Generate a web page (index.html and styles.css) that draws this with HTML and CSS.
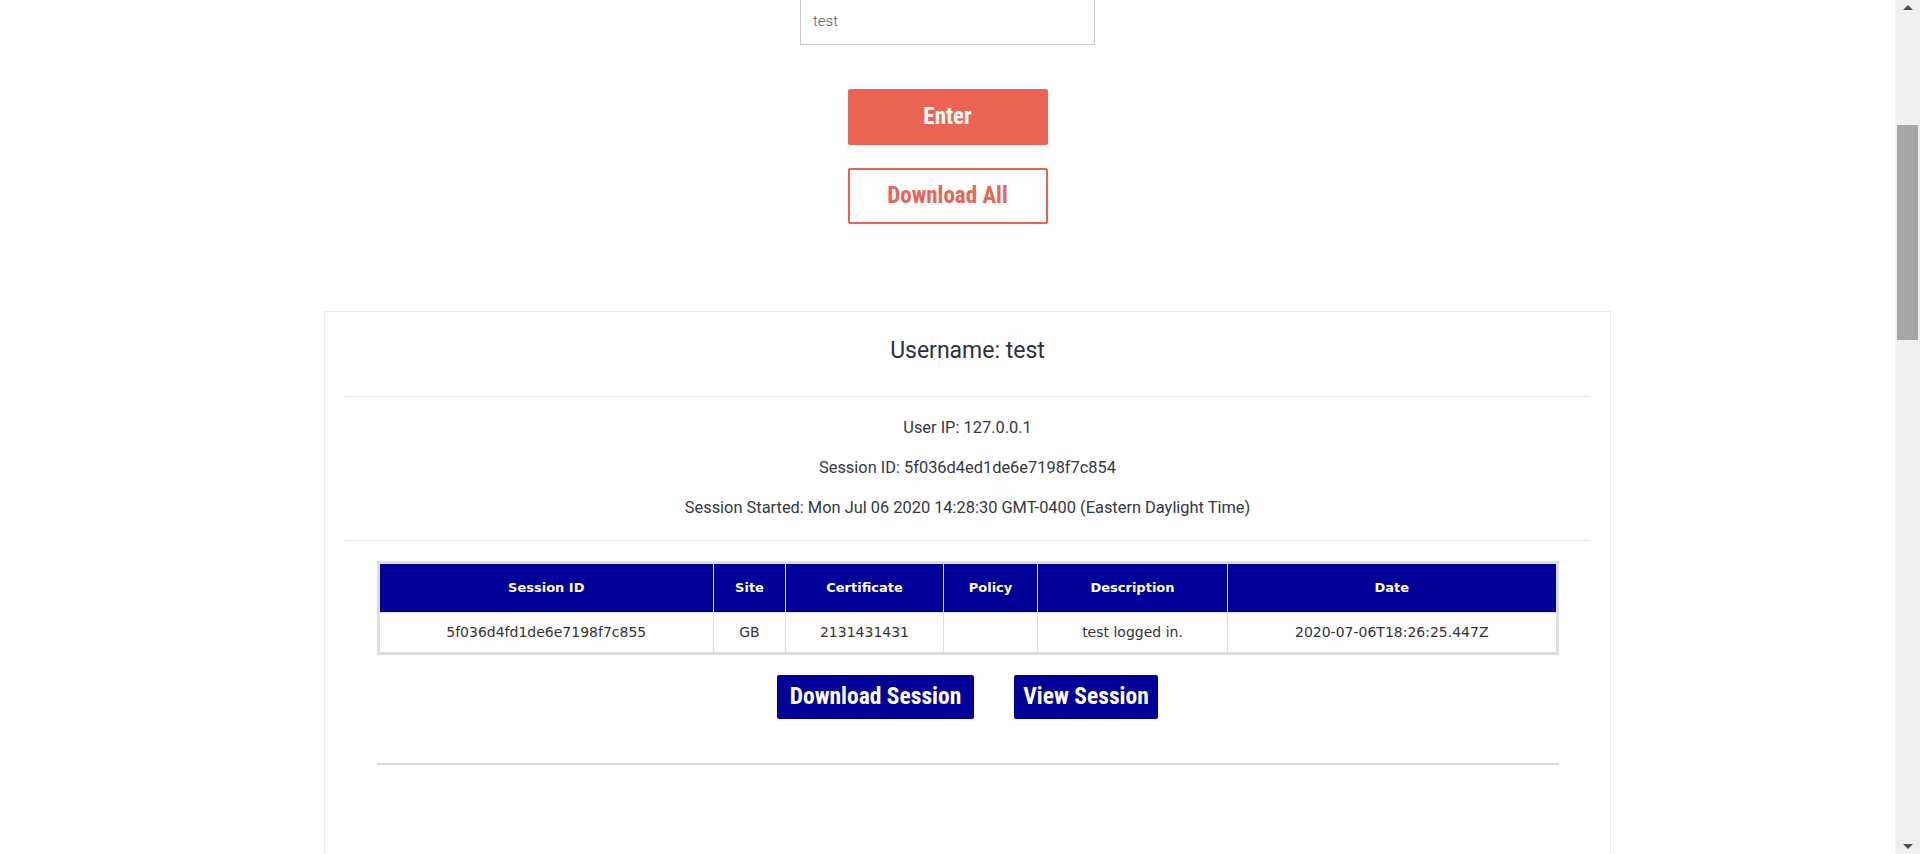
FILE: index.html
```html
<!DOCTYPE html>
<html lang="en">
<head>
<meta charset="utf-8">
<title>Sessions</title>
<link rel="stylesheet" href="styles.css">
</head>
<body>
<div class="page">
  <main class="main">
    <section class="login">
      <input class="user-input" type="text" value="test">
      <button class="btn-enter">Enter</button>
      <button class="btn-download-all">Download All</button>
    </section>

    <section class="card">
      <h2 class="card-title">Username: test</h2>
      <div class="info">
        <p>User IP: 127.0.0.1</p>
        <p>Session ID: 5f036d4ed1de6e7198f7c854</p>
        <p>Session Started: Mon Jul 06 2020 14:28:30 GMT-0400 (Eastern Daylight Time)</p>
      </div>
      <div class="table-wrap">
        <table class="sessions">
          <thead>
            <tr>
              <th class="c-id">Session ID</th>
              <th class="c-site">Site</th>
              <th class="c-cert">Certificate</th>
              <th class="c-policy">Policy</th>
              <th class="c-desc">Description</th>
              <th class="c-date">Date</th>
            </tr>
          </thead>
          <tbody>
            <tr>
              <td>5f036d4fd1de6e7198f7c855</td>
              <td>GB</td>
              <td>2131431431</td>
              <td></td>
              <td>test logged in.</td>
              <td>2020-07-06T18:26:25.447Z</td>
            </tr>
          </tbody>
        </table>
      </div>
      <div class="session-actions">
        <button class="btn-blue btn-dl-session">Download Session</button>
        <button class="btn-blue btn-view-session">View Session</button>
      </div>
      <div class="rule"></div>
    </section>
  </main>
  <div class="scrollbar">
    <div class="sb-arrow sb-up"></div>
    <div class="sb-track"><div class="sb-thumb"></div></div>
    <div class="sb-arrow sb-down"></div>
  </div>
</div>
</body>
</html>
```

FILE: styles.css
```css
* { box-sizing: border-box; }

html, body {
  margin: 0;
  padding: 0;
  background: #ffffff;
}

.page {
  display: flex;
  height: 854px;
  overflow: hidden;
}

.main {
  flex: 1;
  min-width: 0;
  font-family: Roboto, "Liberation Sans", sans-serif;
  color: #333842;
}

.login {
  display: flex;
  flex-direction: column;
  align-items: center;
}

.user-input {
  margin-top: -3px;
  width: 295px;
  height: 48px;
  border: 1px solid #cccccc;
  border-radius: 0;
  padding: 0 12px;
  font-family: Roboto, sans-serif;
  font-size: 15px;
  font-weight: 300;
  color: #555a63;
  outline: none;
}

.btn-enter,
.btn-download-all {
  width: 200px;
  height: 56px;
  border-radius: 2px;
  font-family: "Liberation Sans Narrow", "Roboto Condensed", Roboto, sans-serif;
  font-weight: bold;
  font-size: 23px;
  padding: 0 0 2px;
  cursor: pointer;
}

.btn-enter {
  margin-top: 44px;
  background: #eb6453;
  border: none;
  color: #ffffff;
}

.btn-download-all {
  margin-top: 23px;
  background: #ffffff;
  border: 2px solid #eb6453;
  color: #eb6453;
}

.card {
  margin-top: 87px;
  margin-left: 324px;
  width: 1287px;
  min-height: 700px;
  border: 1px solid #ebebeb;
  padding: 0 20px;
}

.card-title {
  margin: 0;
  padding: 26px 0 32px;
  line-height: 26px;
  font-size: 23px;
  font-weight: 400;
  text-align: center;
  color: #2d313a;
  border-bottom: 1px solid #e9e9e9;
}

.info {
  display: flex;
  flex-direction: column;
  gap: 16px;
  padding: 19px 0 20px;
  border-bottom: 1px solid #e9e9e9;
  text-align: center;
  font-size: 16.4px;
  line-height: 24px;
}

.info p {
  margin: 0;
}

.table-wrap {
  width: 1182px;
  margin: 20px auto 0;
  border: 3px solid #dddddd;
}

.sessions {
  width: 100%;
  table-layout: fixed;
  border-collapse: collapse;
  font-family: "DejaVu Sans", Verdana, sans-serif;
  font-size: 13px;
}

.sessions th,
.sessions td {
  text-align: center;
  padding: 0 4px;
  border-left: 1px solid #dddddd;
}

.sessions th:first-child,
.sessions td:first-child {
  border-left: none;
}

.sessions th {
  height: 48px;
  background: #000099;
  color: #ffffff;
  font-weight: bold;
  border-bottom: 1px solid #dddddd;
}

.sessions td {
  height: 40px;
  color: #333333;
  font-size: 14px;
}

.c-id { width: 334px; }
.c-site { width: 72px; }
.c-cert { width: 158px; }
.c-policy { width: 94px; }
.c-desc { width: 190px; }
.c-date { width: 328px; }

.session-actions {
  display: flex;
  justify-content: center;
  gap: 40px;
  margin-top: 20px;
}

.btn-blue {
  height: 44px;
  background: #000099;
  color: #ffffff;
  border: none;
  border-radius: 2px;
  font-family: "Liberation Sans Narrow", "Roboto Condensed", Roboto, sans-serif;
  font-weight: bold;
  font-size: 23.5px;
  padding: 0 0 2px;
  cursor: pointer;
}

.btn-dl-session { width: 197px; }
.btn-view-session { width: 144px; }

.rule {
  width: 1182px;
  height: 2px;
  margin: 44px auto 0;
  background: #d9d9d9;
}

.scrollbar {
  width: 25px;
  flex: 0 0 25px;
  background: #f0f0f0;
  display: flex;
  flex-direction: column;
  align-items: center;
}

.sb-arrow {
  height: 17px;
  width: 100%;
  position: relative;
}

.sb-up::after,
.sb-down::after {
  content: "";
  position: absolute;
  left: 8px;
  width: 0;
  height: 0;
  border-left: 5px solid transparent;
  border-right: 5px solid transparent;
}

.sb-up::after {
  top: 5px;
  border-bottom: 5px solid #505050;
}

.sb-down::after {
  bottom: 5px;
  border-top: 5px solid #505050;
}

.sb-track {
  flex: 1;
  width: 100%;
  padding: 0 2px;
}

.sb-thumb {
  margin-top: 108px;
  height: 215px;
  width: 21px;
  background: #a6a6a6;
}
```
